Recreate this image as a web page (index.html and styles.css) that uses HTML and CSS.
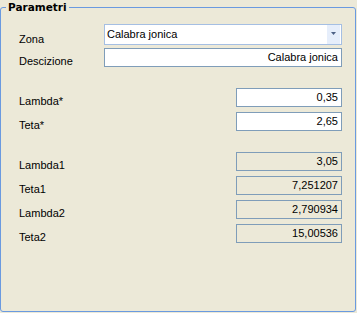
FILE: index.html
```html
<!DOCTYPE html>
<html>
<head>
<meta charset="utf-8">
<link rel="stylesheet" href="styles.css">
</head>
<body>
<fieldset class="group">
  <legend class="group-title">Parametri</legend>
  <div class="rows">
    <div class="row row-combo">
      <span class="lbl lbl-combo">Zona</span>
      <div class="combo">
        <span class="combo-text">Calabra jonica</span>
        <span class="combo-btn"><svg width="5" height="3" viewBox="0 0 5 3"><path d="M0 0H5L2.5 3Z" fill="#4d6185"/></svg></span>
      </div>
    </div>
    <div class="row row-desc">
      <span class="lbl lbl-wide">Descizione</span>
      <div class="box box-wide">Calabra jonica</div>
    </div>
    <div class="row row-sect">
      <span class="lbl">Lambda*</span>
      <div class="box box-num">0,35</div>
    </div>
    <div class="row row-next">
      <span class="lbl">Teta*</span>
      <div class="box box-num">2,65</div>
    </div>
    <div class="row row-sect">
      <span class="lbl">Lambda1</span>
      <div class="box box-num box-ro">3,05</div>
    </div>
    <div class="row row-next">
      <span class="lbl">Teta1</span>
      <div class="box box-num box-ro">7,251207</div>
    </div>
    <div class="row row-next">
      <span class="lbl">Lambda2</span>
      <div class="box box-num box-ro">2,790934</div>
    </div>
    <div class="row row-next">
      <span class="lbl">Teta2</span>
      <div class="box box-num box-ro">15,00536</div>
    </div>
  </div>
</fieldset>
</body>
</html>
```
FILE: styles.css
```css
html, body {
  margin: 0;
  padding: 0;
  background: #ece9d8;
}
body {
  font-family: "Liberation Sans", Arial, sans-serif;
  font-size: 11px;
  color: #000;
  width: 357px;
  height: 313px;
  overflow: hidden;
}
.group {
  box-sizing: border-box;
  width: 356px;
  height: 312px;
  margin: 0;
  padding: 10px 13px 0 18px;
  border: 1px solid #6a9ae0;
  border-radius: 3px;
  min-width: 0;
}
.group-title {
  font-family: "DejaVu Sans", Verdana, sans-serif;
  font-weight: bold;
  font-size: 10.5px;
  line-height: 14px;
  padding: 0 2px;
  margin-left: -13px;
}
.rows {
  display: flex;
  flex-direction: column;
}
.row {
  display: flex;
  align-items: flex-start;
  height: 19px;
}
.row-combo { height: 21px; }
.row-desc { margin-top: 3px; }
.row-sect { margin-top: 21px; }
.row-next { margin-top: 5px; }
.lbl {
  line-height: 13px;
  margin-top: 7px;
  white-space: nowrap;
}
.lbl-combo {
  width: 85px;
  margin-top: 9px;
}
.lbl-wide {
  width: 85px;
}
.combo {
  box-sizing: border-box;
  width: 238px;
  height: 21px;
  border: 1px solid #a5bfe3;
  background: #fff;
  display: flex;
  align-items: stretch;
}
.combo-text {
  flex: 1;
  padding-left: 2px;
  line-height: 19px;
}
.combo-btn {
  width: 13px;
  margin: 0 1px 0 0;
  background: #e6eefb;
  display: flex;
  align-items: center;
  justify-content: center;
}
.combo-btn svg {
  display: block;
  margin-top: -2px;
}
.box {
  box-sizing: border-box;
  height: 19px;
  border: 1px solid #7f9db9;
  background: #fff;
  line-height: 17px;
  text-align: right;
  padding-right: 3px;
  white-space: nowrap;
}
.box-wide {
  width: 238px;
}
.box-num {
  width: 106px;
  margin-left: auto;
}
.box-ro {
  background: #ece9d8;
}
```
